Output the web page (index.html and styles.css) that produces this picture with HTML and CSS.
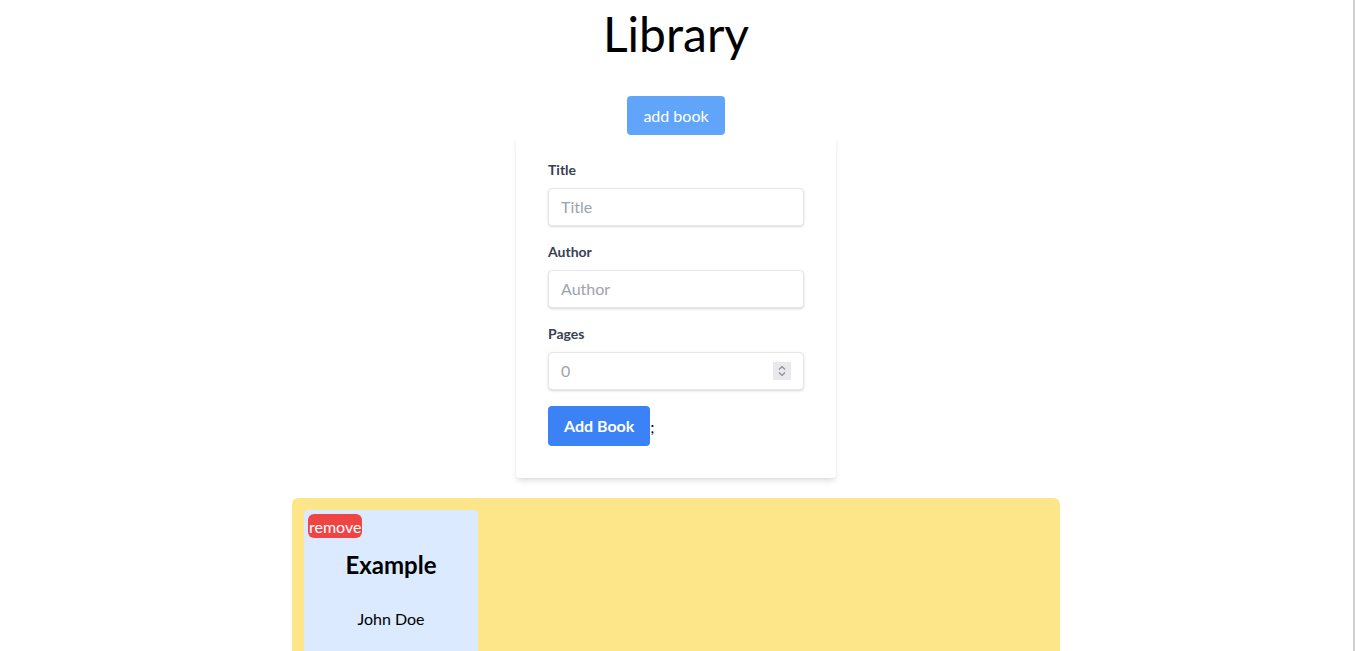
FILE: index.html
```html
<!DOCTYPE html>
<html lang="en">
<head>
<meta charset="utf-8">
<title>Library</title>
<link rel="stylesheet" href="styles.css">
</head>
<body>
<div class="scroll-edge"></div>
<header class="header">
  <h1 class="title">Library</h1>
  <button class="toggle-btn" type="button">add book</button>
</header>
<div class="form-wrap">
  <form class="card-form">
    <div class="field">
      <label class="label" for="title">Title</label>
      <input class="input" id="title" type="text" placeholder="Title">
    </div>
    <div class="field">
      <label class="label" for="author">Author</label>
      <input class="input" id="author" type="text" placeholder="Author">
    </div>
    <div class="field">
      <label class="label" for="pages">Pages</label>
      <div class="number-wrap">
        <input class="input input-number" id="pages" type="number" placeholder="0">
        <span class="spinner" aria-hidden="true">
          <svg width="18" height="18" viewBox="0 0 18 18">
            <path d="M6 7.5 L9 4.5 L12 7.5" fill="none" stroke="#8a8a92" stroke-width="1.2"/>
            <path d="M6 10.5 L9 13.5 L12 10.5" fill="none" stroke="#8a8a92" stroke-width="1.2"/>
          </svg>
        </span>
      </div>
    </div>
    <div class="actions"><button class="submit-btn" type="button">Add Book</button>;</div>
  </form>
</div>
<main class="shelf">
  <div class="book">
    <button class="remove-btn" type="button">remove</button>
    <h2 class="book-title">Example</h2>
    <p class="book-author">John Doe</p>
  </div>
</main>
</body>
</html>
```
FILE: styles.css
```css
* { box-sizing: border-box; }
html, body { margin: 0; padding: 0; }
body {
  font-family: "Lato", "Noto Sans", sans-serif;
  color: #000;
  background: #fff;
  overflow: hidden;
  margin-right: 3px;
}
.scroll-edge {
  position: fixed;
  top: 0;
  right: 0;
  width: 2px;
  height: 100%;
  background: #cfcfcf;
}
.header {
  display: flex;
  flex-direction: column;
  align-items: center;
  padding-top: 10px;
}
.title {
  margin: 0;
  font-size: 48px;
  line-height: 48px;
  font-weight: 400;
}
.toggle-btn {
  margin-top: 38px;
  height: 39px;
  padding: 0 16px;
  border: 0;
  border-radius: 4px;
  background: #60a5fa;
  color: #fff;
  font-family: inherit;
  font-size: 16px;
}
.form-wrap {
  display: flex;
  justify-content: center;
}
.card-form {
  width: 320px;
  margin-top: 1px;
  padding: 24px 32px 32px;
  background: #fff;
  border-radius: 4px;
  box-shadow: 0 4px 6px -1px rgba(0,0,0,0.1), 0 2px 4px -1px rgba(0,0,0,0.06);
}
.field { margin-bottom: 16px; }
.label {
  display: block;
  margin-bottom: 8px;
  font-size: 14px;
  line-height: 20px;
  font-weight: 700;
  color: #374151;
}
.input {
  display: block;
  width: 100%;
  height: 38px;
  padding: 7px 12px 9px;
  border: 1px solid #e5e7eb;
  border-radius: 4px;
  box-shadow: 0 1px 3px 0 rgba(0,0,0,0.1), 0 1px 2px 0 rgba(0,0,0,0.06);
  font-family: inherit;
  font-size: 16px;
  color: #374151;
  outline: none;
  background: #fff;
}
.input::placeholder { color: #9ca3af; }
.number-wrap { position: relative; }
.input-number { -moz-appearance: textfield; appearance: textfield; }
.input-number::-webkit-inner-spin-button,
.input-number::-webkit-outer-spin-button { -webkit-appearance: none; margin: 0; }
.spinner {
  position: absolute;
  top: 10px;
  right: 13px;
  width: 18px;
  height: 18px;
  background: #e9e9ed;
  display: flex;
}
.actions {
  display: flex;
  align-items: center;
  font-size: 16px;
}
.submit-btn {
  height: 40px;
  padding: 0 16px 2px;
  border: 0;
  border-radius: 4px;
  background: #3b82f6;
  color: #fff;
  font-family: inherit;
  font-size: 16px;
  font-weight: 700;
}
.shelf {
  width: 768px;
  margin: 20px auto 0;
  padding: 12px;
  min-height: 200px;
  background: #fde68a;
  border-radius: 6px;
  display: flex;
  gap: 12px;
}
.book {
  width: 174px;
  min-height: 180px;
  padding: 4px;
  background: #dbeafe;
  border-radius: 4px;
  text-align: center;
  display: flex;
  flex-direction: column;
  align-items: center;
}
.remove-btn {
  align-self: flex-start;
  margin-top: 0;
  height: 24px;
  padding: 0 1px;
  border: 0;
  border-radius: 6px;
  background: #ef4444;
  color: #fff;
  font-family: inherit;
  font-size: 16px;
}
.book-title {
  margin: 11px 0 0;
  font-size: 24px;
  line-height: 32px;
  font-weight: 700;
}
.book-author {
  margin: 26px 0 0;
  font-size: 16px;
  line-height: 24px;
}
```
